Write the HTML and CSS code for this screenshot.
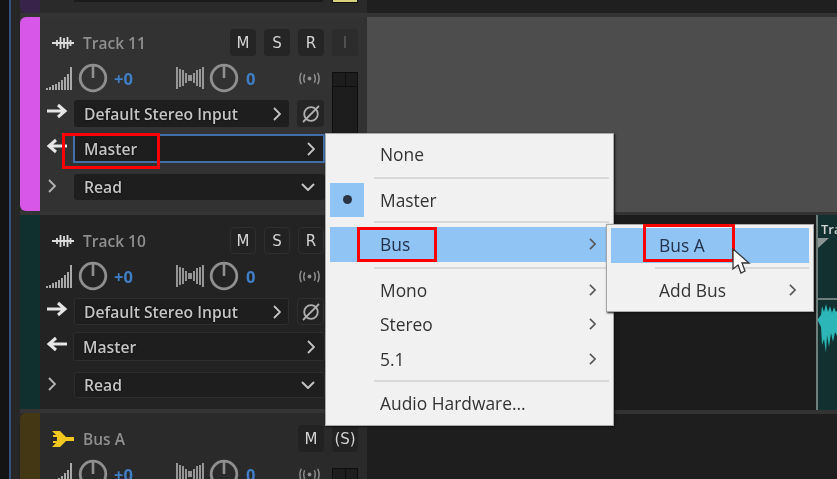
FILE: index.html
```html
<!DOCTYPE html>
<html lang="en">
<head>
    <meta charset="UTF-8">
    <title>Track output routing</title>
    <link rel="stylesheet" href="styles.css">
</head>
<body>
    <svg class="defs" width="0" height="0">
        <symbol id="i-wave" viewBox="0 0 22 14"><path d="M0 7h22M5 4v6M8.500 1v12M12 2v10M15.500 1v12M18.500 4v6" fill="none" stroke="currentColor" stroke-width="1.800"/></symbol>
        <symbol id="i-vol" viewBox="0 0 26 25"><path d="M1 24v-2M4 24v-3M7 24v-5M10 24v-6M13 24v-8M16 24v-10M19 24v-13M22 24v-16M25 24V1" fill="none" stroke="currentColor" stroke-width="2"/></symbol>
        <symbol id="i-pan" viewBox="0 0 28 24"><path d="M1 1v22M4 3v18M7 4v16M10 7v10M13 9v6M15 9v6M18 7v10M21 4v16M24 3v18M27 1v22" fill="none" stroke="currentColor" stroke-width="1.700"/></symbol>
        <symbol id="i-knob" viewBox="0 0 30 30"><circle cx="15" cy="15" r="12.800" fill="none" stroke="currentColor" stroke-width="2.800"/><path d="M15 2v13" stroke="currentColor" stroke-width="2.600"/></symbol>
        <symbol id="i-radio" viewBox="0 0 26 14"><circle cx="13" cy="7" r="2" fill="currentColor"/><path d="M8 2.500q-2 4.500 0 9M18 2.500q2 4.500 0 9M4.500 1q-3 6 0 12M21.500 1q3 6 0 12" fill="none" stroke="currentColor" stroke-width="1.500"/></symbol>
        <symbol id="i-in" viewBox="0 0 22 16"><path d="M1 8h18M12 2l7 6-7 6" fill="none" stroke="currentColor" stroke-width="3"/></symbol>
        <symbol id="i-out" viewBox="0 0 22 16"><path d="M21 8H3M10 2L3 8l7 6" fill="none" stroke="currentColor" stroke-width="3"/></symbol>
        <symbol id="i-right" viewBox="0 0 8 14"><path d="M1 1l6 6-6 6" fill="none" stroke="currentColor" stroke-width="1.800"/></symbol>
        <symbol id="i-down" viewBox="0 0 14 8"><path d="M1 1l6 6 6-6" fill="none" stroke="currentColor" stroke-width="2"/></symbol>
        <symbol id="i-phase" viewBox="0 0 20 20"><circle cx="10" cy="10" r="6.800" fill="none" stroke="currentColor" stroke-width="1.800"/><path d="M2 18L18 2" stroke="currentColor" stroke-width="1.800"/></symbol>
        <symbol id="i-bus" viewBox="0 0 22 18"><path d="M0 1h8l6 6h8v4h-8l-6 6H0l4-4H1v-2h4V7H1V5h3z" fill="currentColor"/></symbol>
    </svg>

    <div class="app">
        <div class="mixer">
            <div class="track track-prev">
                <div class="strip"></div>
                <div class="prev-body">
                    <div class="prev-select"></div>
                    <div class="prev-meter"></div>
                </div>
            </div>

            <div class="track track-pink">
                <div class="strip"></div>
                <div class="track-body">
                    <div class="head">
                        <svg class="icon-wave"><use href="#i-wave"/></svg>
                        <span class="name">Track 11</span>
                        <div class="btns">
                            <span class="btn">M</span><span class="btn">S</span><span class="btn">R</span><span class="btn btn-off">I</span>
                        </div>
                    </div>
                    <div class="lower">
                        <div class="controls">
                            <div class="row-knobs">
                                <svg class="icon-vol"><use href="#i-vol"/></svg>
                                <svg class="knob"><use href="#i-knob"/></svg>
                                <span class="val val-vol">+0</span>
                                <svg class="icon-pan"><use href="#i-pan"/></svg>
                                <svg class="knob"><use href="#i-knob"/></svg>
                                <span class="val val-pan">0</span>
                                <svg class="icon-radio"><use href="#i-radio"/></svg>
                            </div>
                            <div class="row row-in">
                                <svg class="icon-arrow"><use href="#i-in"/></svg>
                                <div class="select select-in">Default Stereo Input<svg class="chev"><use href="#i-right"/></svg></div>
                                <span class="btn btn-phase"><svg class="icon-phase"><use href="#i-phase"/></svg></span>
                            </div>
                            <div class="row row-out">
                                <svg class="icon-arrow"><use href="#i-out"/></svg>
                                <div class="select select-out focus">Master<svg class="chev"><use href="#i-right"/></svg></div>
                            </div>
                            <div class="row row-read">
                                <svg class="icon-expand"><use href="#i-right"/></svg>
                                <div class="select select-read">Read<svg class="chev-down"><use href="#i-down"/></svg></div>
                            </div>
                        </div>
                        <div class="meter"><div class="meter-top"><i></i><i></i></div></div>
                    </div>
                </div>
            </div>

            <div class="track track-teal">
                <div class="strip"></div>
                <div class="track-body">
                    <div class="head">
                        <svg class="icon-wave"><use href="#i-wave"/></svg>
                        <span class="name">Track 10</span>
                        <div class="btns">
                            <span class="btn">M</span><span class="btn">S</span><span class="btn">R</span><span class="btn btn-off">I</span>
                        </div>
                    </div>
                    <div class="lower">
                        <div class="controls">
                            <div class="row-knobs">
                                <svg class="icon-vol"><use href="#i-vol"/></svg>
                                <svg class="knob"><use href="#i-knob"/></svg>
                                <span class="val val-vol">+0</span>
                                <svg class="icon-pan"><use href="#i-pan"/></svg>
                                <svg class="knob"><use href="#i-knob"/></svg>
                                <span class="val val-pan">0</span>
                                <svg class="icon-radio"><use href="#i-radio"/></svg>
                            </div>
                            <div class="row row-in">
                                <svg class="icon-arrow"><use href="#i-in"/></svg>
                                <div class="select select-in">Default Stereo Input<svg class="chev"><use href="#i-right"/></svg></div>
                                <span class="btn btn-phase"><svg class="icon-phase"><use href="#i-phase"/></svg></span>
                            </div>
                            <div class="row row-out">
                                <svg class="icon-arrow"><use href="#i-out"/></svg>
                                <div class="select select-out">Master<svg class="chev"><use href="#i-right"/></svg></div>
                            </div>
                            <div class="row row-read">
                                <svg class="icon-expand"><use href="#i-right"/></svg>
                                <div class="select select-read">Read<svg class="chev-down"><use href="#i-down"/></svg></div>
                            </div>
                        </div>
                        <div class="meter"><div class="meter-top"><i></i><i></i></div></div>
                    </div>
                </div>
            </div>

            <div class="track track-bus">
                <div class="strip"></div>
                <div class="track-body">
                    <div class="head">
                        <svg class="icon-bus"><use href="#i-bus"/></svg>
                        <span class="name">Bus A</span>
                        <div class="btns">
                            <span class="btn">M</span><span class="btn">(S)</span>
                        </div>
                    </div>
                    <div class="lower">
                        <div class="controls">
                            <div class="row-knobs">
                                <svg class="icon-vol"><use href="#i-vol"/></svg>
                                <svg class="knob"><use href="#i-knob"/></svg>
                                <span class="val val-vol">+0</span>
                                <svg class="icon-pan"><use href="#i-pan"/></svg>
                                <svg class="knob"><use href="#i-knob"/></svg>
                                <span class="val val-pan">0</span>
                                <svg class="icon-radio"><use href="#i-radio"/></svg>
                            </div>
                        </div>
                        <div class="meter"><div class="meter-top"><i></i><i></i></div></div>
                    </div>
                </div>
            </div>
        </div>

        <div class="timeline">
            <div class="lane lane-top"></div>
            <div class="lane lane-empty"></div>
            <div class="lane lane-clip">
                <div class="clip">
                    <div class="clip-head">Track<div class="clip-fade"></div></div>
                    <div class="clip-wave">
                        <svg viewBox="0 0 21 60" width="21" height="60"><path d="M0 16l3-4 1-9 2 6 2-8 2 8 2-6 2 7 2-6 2 5 3-3v22l-2 5-2-4-2 10-2-9-2 14-2-12-1 18-2-14-2 6-1-18-3-6z" fill="#2cb6b8"/></svg>
                    </div>
                </div>
            </div>
            <div class="lane lane-bottom"></div>
        </div>

        <div class="menu menu-main">
            <div class="item">None</div>
            <div class="sep sep-first"></div>
            <div class="item item-checked"><span class="check"><b></b></span>Master</div>
            <div class="sep"></div>
            <div class="item item-on">Bus<svg class="arrow"><use href="#i-right"/></svg></div>
            <div class="sep sep-wide"></div>
            <div class="item">Mono<svg class="arrow"><use href="#i-right"/></svg></div>
            <div class="item">Stereo<svg class="arrow"><use href="#i-right"/></svg></div>
            <div class="item">5.1<svg class="arrow"><use href="#i-right"/></svg></div>
            <div class="sep"></div>
            <div class="item">Audio Hardware...</div>
        </div>

        <div class="menu menu-sub">
            <div class="item item-on">Bus A</div>
            <div class="sep"></div>
            <div class="item">Add Bus<svg class="arrow"><use href="#i-right"/></svg></div>
        </div>

        <div class="mark mark-master"></div>
        <div class="mark mark-bus"></div>
        <div class="mark mark-busa"></div>

        <svg class="cursor" viewBox="0 0 20 27" width="20" height="27"><path d="M2 1v20l5-4 3 8 4-2-3-8h7z" fill="#fff" stroke="#333" stroke-width="1.300"/></svg>
    </div>
</body>
</html>
```

FILE: styles.css
```css
* {
    box-sizing: border-box;
}
html, body {
    margin: 0;
    height: 100%;
    overflow: hidden;
    background: #151515;
}
.defs {
    position: absolute;
}
.app {
    position: relative;
    display: flex;
    width: 837px;
    height: 479px;
    overflow: hidden;
    font-family: "Open Sans", sans-serif;
    filter: blur(0.45px);
}

/* left column */
.mixer {
    width: 367px;
    height: 479px;
    padding-left: 20px;
    display: flex;
    flex-direction: column;
    gap: 4px;
    overflow: hidden;
    background: linear-gradient(90deg, #141414 0 9px, #34527f 9px 11px, #262626 11px 20px, #343434 20px);
}
.track {
    display: flex;
    flex: none;
    height: 194px;
    background: #323232;
}
.track-prev {
    height: 13px;
    background: #2a2a2a;
}
.track-prev .strip {
    background: #38234a;
    border-radius: 0 0 0 6px;
}
.prev-body {
    flex: 1;
    display: flex;
    align-items: flex-start;
    padding-left: 34px;
}
.prev-select {
    width: 249px;
    height: 2px;
    background: #1b1b1b;
}
.prev-meter {
    width: 26px;
    height: 3px;
    margin-left: 9px;
    background: #d8d27c;
    border: 1px solid #111;
    border-top: 0;
}
.track-teal {
    background: #232323;
}
.track-bus {
    height: 70px;
    background: #2a2a2a;
}
.strip {
    width: 20px;
    flex: none;
    border-radius: 6px 0 0 6px;
}
.track-pink .strip {
    background: #d757e8;
}
.track-teal .strip {
    background: #10302f;
    border-radius: 0;
}
.track-bus .strip {
    background: #433813;
    border-radius: 6px 0 0 0;
}
.track-body {
    flex: 1;
    padding: 12px 0 0 6px;
    color: #c8c8c8;
}
.head {
    display: flex;
    align-items: center;
    height: 27px;
}
.icon-wave {
    width: 22px;
    height: 14px;
    margin-left: 6px;
    color: #ddd;
}
.icon-bus {
    width: 22px;
    height: 18px;
    margin-left: 6px;
    color: #f2c81e;
}
.name {
    margin-left: 9px;
    font-size: 15.500px;
    font-weight: 600;
    color: #8f8f8f;
}
.btns {
    margin-left: auto;
    margin-right: 9px;
    display: flex;
    gap: 8px;
}
.btn {
    width: 26px;
    height: 27px;
    display: flex;
    align-items: center;
    justify-content: center;
    border-radius: 4px;
    background: #252525;
    font-family: "DejaVu Sans", sans-serif;
    font-size: 15px;
    color: #d4d4d4;
}
.btn-off {
    background: #2c2c2c;
    color: #5c5c5c;
}
.track-teal .btn {
    background: #222;
    border: 1px solid #2f2f2f;
}
.track-bus .btn {
    background: #222;
}
.lower {
    display: flex;
    gap: 7px;
    margin-top: 8px;
}
.controls {
    width: 279px;
    flex: none;
}
.row-knobs {
    display: flex;
    align-items: center;
    height: 28px;
    color: #a9a9a9;
}
.icon-vol {
    width: 26px;
    height: 25px;
}
.knob {
    width: 30px;
    height: 30px;
    margin-left: 6px;
    flex: none;
    color: #8f8f8f;
}
.val {
    font-size: 16.500px;
    font-weight: 700;
    color: #3f7fc6;
    margin-left: 6px;
}
.val-vol {
    width: 62px;
}
.val-pan {
    width: 51px;
    margin-left: 7px;
}
.icon-pan {
    width: 28px;
    height: 24px;
}
.row-knobs .icon-pan + .knob {
    margin-left: 5px;
}
.icon-radio {
    width: 25px;
    height: 15px;
    color: #8f8f8f;
}
.row {
    display: flex;
    align-items: center;
}
.row-in {
    margin-top: 8px;
    height: 27px;
    gap: 8px;
}
.row-out {
    margin-top: 7px;
    height: 29px;
}
.row-read {
    margin-top: 11px;
    height: 26px;
}
.icon-arrow {
    width: 22px;
    height: 16px;
    margin-right: 5px;
    margin-top: -5px;
    color: #e6e6e6;
    flex: none;
}
.icon-expand {
    width: 8px;
    height: 14px;
    margin: -3px 18px 0 2px;
    color: #b5b5b5;
    flex: none;
}
.select {
    display: flex;
    align-items: center;
    justify-content: space-between;
    height: 100%;
    padding: 0 10px;
    border-radius: 3px;
    background: #1e1e1e;
    font-size: 15.700px;
    font-weight: 600;
    color: #c4c4c4;
    text-shadow: 0 0 2px #000;
}
.select-in {
    width: 215px;
    padding-right: 8px;
}
.select-out,
.select-read {
    flex: 1;
}
.row-in .icon-arrow {
    margin-right: -2px;
}
.focus {
    border: 2px solid #3f6ea8;
    border-radius: 0;
    padding: 0 8px 0 9px;
}
.track-teal .select {
    border: 1px solid #2e2e2e;
    padding: 0 9px;
}
.track-teal .select-in {
    padding-right: 7px;
}
.chev {
    width: 8px;
    height: 14px;
    color: #c4c4c4;
}
.chev-down {
    width: 14px;
    height: 8px;
    color: #c4c4c4;
}
.btn-phase {
    width: 27px;
    color: #b0b0b0;
}
.icon-phase {
    width: 20px;
    height: 20px;
}
.meter {
    width: 26px;
    height: 110px;
    margin-top: 8px;
    flex: none;
    background: #1d1d1d;
    border: 1px solid #0e0e0e;
}
.meter-top {
    display: flex;
    height: 14px;
    border-bottom: 1px solid #0e0e0e;
}
.meter-top i {
    flex: 1;
}
.meter-top i + i {
    border-left: 1px solid #0e0e0e;
}

/* right column */
.timeline {
    flex: 1;
    display: flex;
    flex-direction: column;
    background: #333;
}
.lane-top {
    height: 13px;
    background: #1f1f1f;
    margin-bottom: 4px;
}
.lane-empty {
    height: 195px;
    background: #4d4d4d;
    margin-bottom: 3px;
}
.lane-clip {
    height: 195px;
    display: flex;
    justify-content: flex-end;
    background: #1c1c1c;
    margin-bottom: 4px;
}
.lane-bottom {
    flex: 1;
    background: #1e1e1e;
}
.clip {
    width: 21px;
    background: #11302f;
    border-left: 2px solid #6f7d7b;
    overflow: hidden;
}
.clip-head {
    height: 85px;
    padding: 5px 0 0 3px;
    font-size: 13px;
    line-height: 18px;
    font-weight: 600;
    color: #d5d5d5;
    overflow: hidden;
    border-bottom: 2px solid #6f7d7b;
}
.clip-fade {
    width: 0;
    height: 0;
    margin-left: -3px;
    border-top: 10px solid #8b9694;
    border-right: 11px solid transparent;
}
.clip-wave {
    margin-top: 3px;
}

/* popup menus */
.menu {
    position: absolute;
    background: #f1f1f1;
    border: 1px solid #a8a8a8;
    box-shadow: 1px 1px 2px #111;
    font-size: 17.400px;
    color: #333;
}
.menu-main {
    left: 325px;
    top: 133px;
    width: 289px;
    height: 293px;
    padding: 3px 4px;
}
.menu-sub {
    left: 606px;
    top: 224px;
    width: 208px;
    height: 88px;
    padding: 3px 4px;
}
.item {
    position: relative;
    display: flex;
    align-items: center;
    height: 34.500px;
    padding-left: 50px;
}
.menu-sub .item {
    padding-left: 48px;
}
.item-on {
    background: #8fc4f4;
    color: #24324a;
}
.check {
    position: absolute;
    left: 0;
    top: 0;
    width: 34px;
    height: 34px;
    display: flex;
    align-items: center;
    justify-content: center;
    background: #8fc4f4;
}
.check b {
    width: 9px;
    height: 9px;
    border-radius: 50%;
    background: #2a3442;
}
.arrow {
    position: absolute;
    right: 13px;
    width: 7px;
    height: 12px;
    color: #555;
}
.sep {
    height: 2px;
    margin: 4px 0 4px 44px;
    background: #d9d9d9;
}
.sep-first {
    margin-top: 5px;
}
.sep-wide {
    margin-top: 5px;
    margin-bottom: 4px;
}

/* red callouts drawn on top of the screenshot */
.mark {
    position: absolute;
    border: 3px solid #f00;
}
.mark-master {
    left: 62px;
    top: 133px;
    width: 98px;
    height: 36px;
}
.mark-bus {
    left: 357px;
    top: 227px;
    width: 80px;
    height: 35px;
}
.mark-busa {
    left: 643px;
    top: 224px;
    width: 92px;
    height: 38px;
}
.cursor {
    position: absolute;
    left: 731px;
    top: 248px;
}
```
